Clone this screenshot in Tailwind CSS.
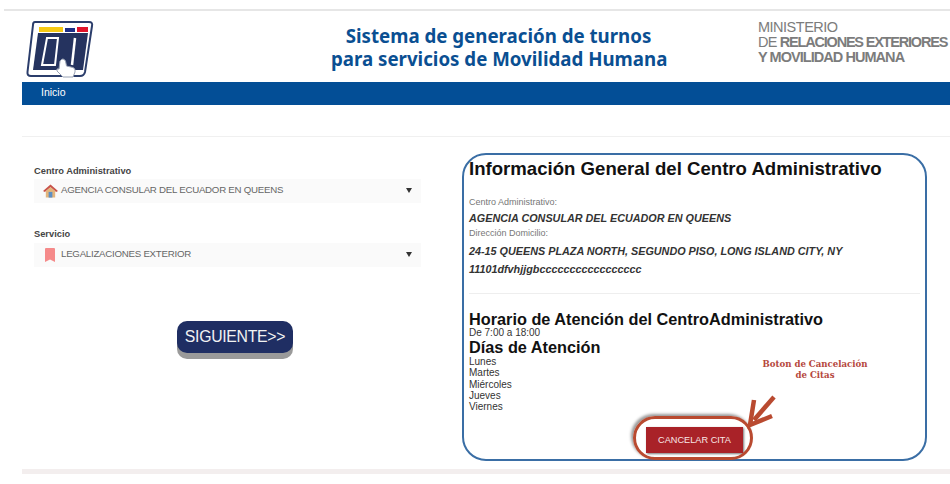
<!DOCTYPE html>
<html lang="es">
<head>
    <meta charset="UTF-8">
    <title>Sistema de generación de turnos</title>
    <script src="https://cdn.jsdelivr.net/npm/@tailwindcss/browser@4"></script>
</head>
<body class="bg-white">
<div class="w-[950px] h-[484px] overflow-hidden bg-white font-['Liberation_Sans',Arial,sans-serif] text-[#333]">
    <!-- linea superior -->
    <div class="ml-[4px] h-[11px] border-b-2 border-[#e6e6e6]"></div>

    <!-- HEADER -->
    <header class="ml-[22px] h-[71px] flex">
        <div class="w-[309px] shrink-0 pl-[4px] pt-[9px]">
            <svg width="68" height="58" viewBox="0 0 68 58">
                <path d="M9 2 H63 Q67 2 66 6 L59 52 Q58 56 54 56 H5 Q1 56 1.5 52 L7 5 Q7 2 9 2 Z" fill="#fff" stroke="#2b3d6b" stroke-width="2"/>
                <rect x="13" y="7" width="24" height="5" fill="#f5c915"/>
                <rect x="39" y="8" width="10" height="4" fill="#1e2f86"/>
                <rect x="51" y="7" width="11" height="5" fill="#e0142a"/>
                <path d="M12 13 H62 L57 50 H7 Z" fill="#25335f"/>
                <path d="M21 18 H32 L29 45 H16 Z" fill="none" stroke="#fff" stroke-width="2"/>
                <path d="M49 18 L46 45" fill="none" stroke="#fff" stroke-width="2.5"/>
                <path d="M34 41 Q37 37 39.5 41 L40.5 46 L47 47.5 Q50 49 49 52 L47 57 H37 L31 51 Q30 48 33 49 Z" fill="#fff" stroke="#9aa3b5" stroke-width="1"/>
            </svg>
        </div>
        <div class="w-[335px] shrink-0 pt-[13px] text-center font-['Noto_Sans',sans-serif] font-bold text-[18.7px] leading-[23px] text-[#0a4f92] whitespace-nowrap">
            <p>Sistema de generación de turnos</p>
            <p>para servicios de Movilidad Humana</p>
        </div>
        <div class="ml-[92px] w-[192px] shrink-0 pt-[9px] text-[14.5px] leading-[15px] tracking-[-0.5px] text-[#7c7c7c] whitespace-nowrap">
            <p>MINISTERIO</p>
            <p class="tracking-[-0.8px]">DE <b class="tracking-[-1.2px]">RELACIONES EXTERIORES</b></p>
            <p><b class="tracking-[-0.95px]">Y MOVILIDAD HUMANA</b></p>
        </div>
    </header>

    <!-- NAV -->
    <nav class="ml-[22px] h-[23px] bg-[#034e96] pl-[19px] text-[10.5px] leading-[21px] text-white">Inicio</nav>
    <div class="ml-[22px] h-[32px] border-b border-[#f0f0f0]"></div>

    <!-- MAIN -->
    <main class="ml-[22px] mt-[16px] h-[308px] flex">
        <section class="w-[441px] shrink-0 pl-[12px]">
            <label class="block mt-[11px] text-[9.3px] leading-[14px] font-bold text-[#444]">Centro Administrativo</label>
            <div class="mt-[1px] w-[387px] h-[24px] bg-[#fafafa] flex items-center pl-[9px] pr-[9px] pb-[1px] text-[9.7px] tracking-[-0.25px] text-[#666]">
                <svg width="15" height="14" viewBox="0 0 16 14" class="mr-[3px]">
                    <path d="M8 0 L16 7 L14 8 L8 3 L2 8 L0 7 Z" fill="#c9534a"/>
                    <path d="M3 7 L8 3 L13 7 V14 H3 Z" fill="#e3b57c"/>
                    <rect x="6" y="8" width="4" height="6" fill="#5d8fc4"/>
                </svg>
                <span>AGENCIA CONSULAR DEL ECUADOR EN QUEENS</span>
                <span class="ml-auto w-0 h-0 border-x-[3px] border-x-transparent border-t-[5px] border-t-[#333]"></span>
            </div>
            <label class="block mt-[24px] text-[9.3px] leading-[14px] font-bold text-[#444]">Servicio</label>
            <div class="mt-[2px] w-[387px] h-[24px] bg-[#fafafa] flex items-center pl-[11px] pr-[9px] pb-[1px] text-[9.7px] tracking-[-0.25px] text-[#666]">
                <svg width="10" height="14" viewBox="0 0 10 14" class="mr-[6px]">
                    <path d="M0 1 Q0 0 1 0 H9 Q10 0 10 1 V14 L5 11.5 L0 14 Z" fill="#f58a8a"/>
                </svg>
                <span>LEGALIZACIONES EXTERIOR</span>
                <span class="ml-auto w-0 h-0 border-x-[3px] border-x-transparent border-t-[5px] border-t-[#333]"></span>
            </div>
            <div class="mt-[54px] ml-[143px] w-[116px] h-[32px] rounded-[10px] bg-[#1f2e63] shadow-[0_6px_0_#9a9a9a] flex items-center justify-center text-[15.8px] text-[#f2f2f2] tracking-[-0.3px]">SIGUIENTE&gt;&gt;</div>
        </section>

        <section class="relative w-[465px] h-[308px] -ml-[1px] border-2 border-[#3a6ea5] rounded-[24px] px-[5px] text-[#333]">
            <h2 class="mt-[3px] text-[18.6px] leading-[22px] font-bold text-[#111] whitespace-nowrap">Información General del Centro Administrativo</h2>
            <p class="mt-[16px] text-[9px] leading-[12px] text-[#777]">Centro Administrativo:</p>
            <p class="mt-[4px] text-[10.8px] leading-[13px] font-bold italic">AGENCIA CONSULAR DEL ECUADOR EN QUEENS</p>
            <p class="mt-[2px] text-[9px] leading-[12px] text-[#777]">Dirección Domicilio:</p>
            <p class="mt-[3px] text-[10.8px] leading-[18px] font-bold italic">24-15 QUEENS PLAZA NORTH, SEGUNDO PISO, LONG ISLAND CITY, NY<br>11101dfvhjjgbccccccccccccccccc</p>
            <hr class="mt-[15px] border-[#eeeeee]">
            <h3 class="mt-[17px] text-[16.3px] leading-[17px] font-bold text-[#111]">Horario de Atención del CentroAdministrativo</h3>
            <p class="text-[10px] leading-[9px]">De 7:00 a 18:00</p>
            <h3 class="mt-[2px] text-[16.3px] leading-[17px] font-bold text-[#111]">Días de Atención</h3>
            <ul class="text-[10px] leading-[11.3px]">
                <li>Lunes</li>
                <li>Martes</li>
                <li>Miércoles</li>
                <li>Jueves</li>
                <li>Viernes</li>
            </ul>
            <button class="block mx-auto mt-[15px] w-[97px] h-[26px] bg-[#a92228] text-[9.2px] text-[#f8e6e6] shadow-[1px_1px_2px_#777]">CANCELAR CITA</button>

            <!-- anotaciones sobre la captura -->
            <div class="absolute left-[169px] top-[261px] w-[120px] h-[44px] rounded-full border-[3px] border-[#b94a30] shadow-[-2px_-2px_3px_#999]"></div>
            <p class="absolute left-[281px] top-[204px] w-[140px] text-center text-[8.6px] leading-[11px] font-bold font-['DejaVu_Serif',serif] text-[#b5473c] whitespace-nowrap">Boton de Cancelación<br>de Citas</p>
            <svg class="absolute left-[280px] top-[238px]" width="34" height="36" viewBox="0 0 34 36">
                <path d="M30 4 L10 27" stroke="#b94a30" stroke-width="4.5" fill="none"/>
                <path d="M10 7 L6 32 L28 23" stroke="#b94a30" stroke-width="4.5" fill="none"/>
            </svg>
        </section>
    </main>

    <div class="ml-[22px] mt-[8px] h-[5px] bg-[#f3eeee]"></div>
</div>
</body>
</html>
